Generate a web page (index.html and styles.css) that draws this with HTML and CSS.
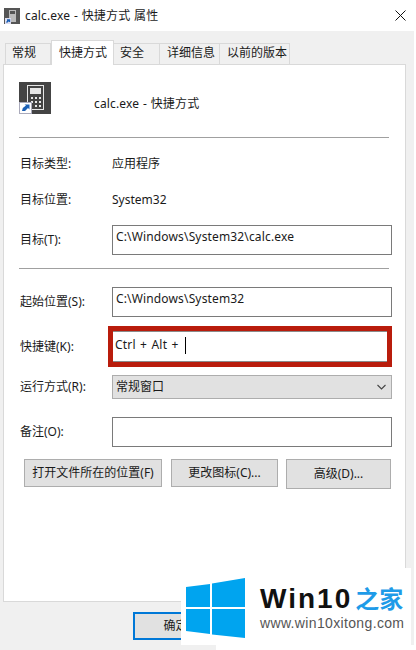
FILE: index.html
```html
<!DOCTYPE html>
<html lang="zh-CN">

<head>
    <meta charset="UTF-8" />
    <title>calc.exe - 快捷方式 属性</title>
    <link rel="stylesheet" href="styles.css">
</head>

<body>

<div class="window">
    <div class="titlebar">
        <svg class="titlebar__icon" width="16" height="16" viewBox="0 0 16 16">
            <rect width="16" height="16" fill="#555"/>
            <rect x="5" y="2" width="7" height="12" fill="#bbb"/>
            <rect x="6" y="3" width="5" height="3" fill="#555"/>
            <rect x="1" y="10" width="6" height="6" fill="#dde"/>
            <path d="M2.5 14.5 L4.5 12.5 M3 12 H5.5 V14" stroke="#1a5fb4" stroke-width="1.4" fill="none"/>
        </svg>
        <span class="titlebar__text wide">calc.exe - 快捷方式 属性</span>
        <svg class="titlebar__close" width="11" height="11" viewBox="0 0 11 11">
            <path d="M0.5 0.5 L10.5 10.5 M10.5 0.5 L0.5 10.5" stroke="#111" stroke-width="1" fill="none"/>
        </svg>
    </div>

    <div class="dialog">
        <div class="tabs">
            <div class="tabs__item tabs__item--w46">常规</div>
            <div class="tabs__item tabs__item--active">快捷方式</div>
            <div class="tabs__item tabs__item--w46">安全</div>
            <div class="tabs__item tabs__item--w60">详细信息</div>
            <div class="tabs__item tabs__item--w70">以前的版本</div>
        </div>

        <div class="panel">
            <div class="head">
                <svg class="head__icon" width="32" height="32" viewBox="0 0 32 32">
                    <rect width="32" height="32" fill="#444"/>
                    <rect x="8" y="3" width="17" height="25" fill="#e6e6e6"/>
                    <rect x="9" y="4" width="15" height="23" fill="#444"/>
                    <rect x="11" y="6" width="11" height="6" fill="#e6e6e6"/>
                    <path d="M12 15h2v2h-2zM16 15h2v2h-2zM20 15h2v2h-2zM12 19h2v2h-2zM16 19h2v2h-2zM20 19h2v2h-2zM16 23h2v2h-2zM20 23h2v2h-2z" fill="#e6e6e6"/>
                    <rect x="0.5" y="20.5" width="12" height="11" fill="#fff" stroke="#aab"/>
                    <path d="M3 29 L3.8 26 L7 23.5 L5.5 22.5 H10.5 V27.5 L9 26 L6 29 Z" fill="#1a5fb4"/>
                </svg>
                <span class="head__text wide">calc.exe - 快捷方式</span>
            </div>

            <hr class="rule">

            <div class="info">
                <span class="label">目标类型:</span>
                <span>应用程序</span>
            </div>
            <div class="info info--second">
                <span class="label">目标位置:</span>
                <span>System32</span>
            </div>
            <div class="field field--target">
                <span class="label">目标(T):</span>
                <div class="input wide">C:\Windows\System32\calc.exe</div>
            </div>

            <hr class="rule rule--second">

            <div class="field field--start">
                <span class="label">起始位置(S):</span>
                <div class="input wide">C:\Windows\System32</div>
            </div>
            <div class="field field--hotkey">
                <span class="label">快捷键(K):</span>
                <div class="hotkey">Ctrl + Alt + <i class="hotkey__caret"></i></div>
            </div>
            <div class="field field--run">
                <span class="label">运行方式(R):</span>
                <div class="select">
                    <span>常规窗口</span>
                    <svg width="9" height="6" viewBox="0 0 9 6">
                        <path d="M0.500 1 L4.500 5 L8.500 1" stroke="#444" stroke-width="1.1" fill="none"/>
                    </svg>
                </div>
            </div>
            <div class="field field--note">
                <span class="label">备注(O):</span>
                <div class="input"></div>
            </div>

            <div class="buttons">
                <div class="btn btn--open">打开文件所在的位置(F)</div>
                <div class="btn btn--icon">更改图标(C)...</div>
                <div class="btn btn--adv">高级(D)...</div>
            </div>
        </div>

        <div class="footer">
            <div class="btn btn--ok">确定</div>
        </div>
    </div>
</div>

<div class="mark">
    <svg class="mark__logo" width="60" height="62" viewBox="0 0 60 62">
        <path d="M0 9 L24 6 V29 H0 Z M26 5.500 L59 0 V29 H26 Z M0 31 H24 V56 L0 53 Z M26 31 H59 V60 L26 56.500 Z" fill="#00a4ef"/>
    </svg>
    <div class="mark__text">
        <div class="mark__name">Win10<span class="mark__cn">之家</span></div>
        <div class="mark__url">www.win10xitong.com</div>
    </div>
</div>

</body>
</html>
```

FILE: styles.css
```css
*,
*::before,
*::after {
    box-sizing: border-box;
}

html,
body {
    margin: 0;
    padding: 0;
}

body {
    width: 416px;
    height: 650px;
    overflow: hidden;
    position: relative;
    background: #fff;
    color: #1a1a1a;
    font-family: "Noto Sans", "Noto Sans CJK SC", sans-serif;
    font-size: 12px;
    line-height: 16px;
}

.wide {
    letter-spacing: 0.15px;
    word-spacing: 0.5px;
}

.window {
    width: 414px;
}

.titlebar {
    height: 31px;
    display: flex;
    align-items: center;
    padding: 0 8px 0 4px;
    background: #fff;
}
.titlebar__text {
    margin-left: 5px;
    flex: 1;
}

.dialog {
    height: 619px;
    background: #f0f0f0;
    padding: 9px 0 0 3px;
}

.tabs {
    display: flex;
    align-items: flex-end;
    height: 24px;
    padding-left: 2px;
    position: relative;
    z-index: 1;
}
.tabs__item {
    height: 21px;
    border: 1px solid #d9d9d9;
    border-bottom: none;
    border-left: none;
    padding: 1px 0 0 6px;
    background: #f0f0f0;
}
.tabs__item:first-child {
    border-left: 1px solid #d9d9d9;
}
.tabs__item--w46 {
    width: 46px;
}
.tabs__item--w60 {
    width: 60px;
    padding-left: 7px;
}
.tabs__item--w70 {
    width: 70px;
    padding-left: 7px;
}
.tabs__item--active {
    width: 63px;
    height: 25px;
    margin-bottom: -1px;
    border-left: 1px solid #d9d9d9;
    padding: 4px 0 0 7px;
    background: #fff;
}

.panel {
    width: 403px;
    height: 538px;
    padding: 16px 0 0 16px;
    background: #fff;
    border: 1px solid #d9d9d9;
}

.head {
    display: flex;
    height: 32px;
    margin: 1px 0 0 -1px;
}
.head__icon {
    margin-right: 43px;
}
.head__text {
    padding-top: 14px;
}

.rule {
    width: 370px;
    height: 1px;
    margin: 23px 0 0 -1px;
    border: none;
    background: #a0a0a0;
}
.rule--second {
    margin-top: 13px;
}

.label {
    width: 92px;
    flex: none;
}

.info {
    display: flex;
    align-items: center;
    margin-top: 18px;
    height: 16px;
}
.info--second {
    margin-top: 20px;
}

.field {
    display: flex;
    align-items: center;
}
.field--target {
    margin-top: 17px;
}
.field--start {
    margin-top: 18px;
}
.field--hotkey {
    margin-top: 9px;
}
.field--run {
    margin-top: 8px;
}
.field--note {
    margin-top: 18px;
}

.input {
    width: 280px;
    height: 30px;
    padding: 3px 3px;
    background: #fff;
    border: 1px solid #7a7a7a;
}

.hotkey {
    width: 284px;
    height: 41px;
    margin-left: -4px;
    padding: 6px 2px;
    display: flex;
    align-items: flex-start;
    white-space: pre;
    word-spacing: 1px;
    letter-spacing: 0.2px;
    background: #fff;
    border: 5px solid #b91c0c;
    box-shadow: inset 0 1px 0 #8a8a8a, inset 0 -1px 0 #8a8a8a;
}
.hotkey__caret {
    display: block;
    width: 1px;
    height: 17px;
    margin-left: 2px;
    background: #000;
}

.select {
    width: 280px;
    height: 24px;
    padding: 0 5px 0 3px;
    display: flex;
    align-items: center;
    justify-content: space-between;
    background: #e1e1e1;
    border: 1px solid #adadad;
}

.buttons {
    display: flex;
    align-items: flex-start;
    margin: 12px 0 0 4px;
}

.btn {
    display: flex;
    align-items: center;
    justify-content: center;
    background: #e1e1e1;
    border: 1px solid #adadad;
}
.btn--open {
    width: 138px;
    height: 28px;
}
.btn--icon {
    width: 107px;
    height: 28px;
    margin-left: 9px;
}
.btn--adv {
    width: 105px;
    height: 30px;
    margin-left: 8px;
}

.footer {
    padding: 10px 0 0 130px;
}
.btn--ok {
    width: 85px;
    height: 28px;
    border: 2px solid #0078d7;
}

/* watermark over the bottom right corner */
.mark {
    position: absolute;
    left: 181px;
    top: 568px;
    width: 230px;
    height: 77px;
    display: flex;
    padding: 10px 0 0 5px;
    background: #fff;
}
.mark::after {
    content: "";
    position: absolute;
    left: 35px;
    top: 77px;
    width: 200px;
    height: 5px;
    background: #fff;
}
.mark__logo {
    flex: none;
}
.mark__text {
    margin-left: 14px;
    padding-top: 4px;
}
.mark__name {
    font-family: "Liberation Sans", sans-serif;
    font-weight: 700;
    font-size: 28px;
    line-height: 32px;
    letter-spacing: 2px;
    color: #111;
    white-space: nowrap;
}
.mark__cn {
    font-family: "Noto Sans CJK SC", sans-serif;
    font-size: 24px;
    margin-left: 3px;
    letter-spacing: 0;
    color: #1e9be8;
}
.mark__url {
    font-family: "Liberation Sans", sans-serif;
    font-size: 14px;
    line-height: 14px;
    margin-top: 1px;
    color: #555;
    letter-spacing: 0.35px;
    white-space: nowrap;
}
```
